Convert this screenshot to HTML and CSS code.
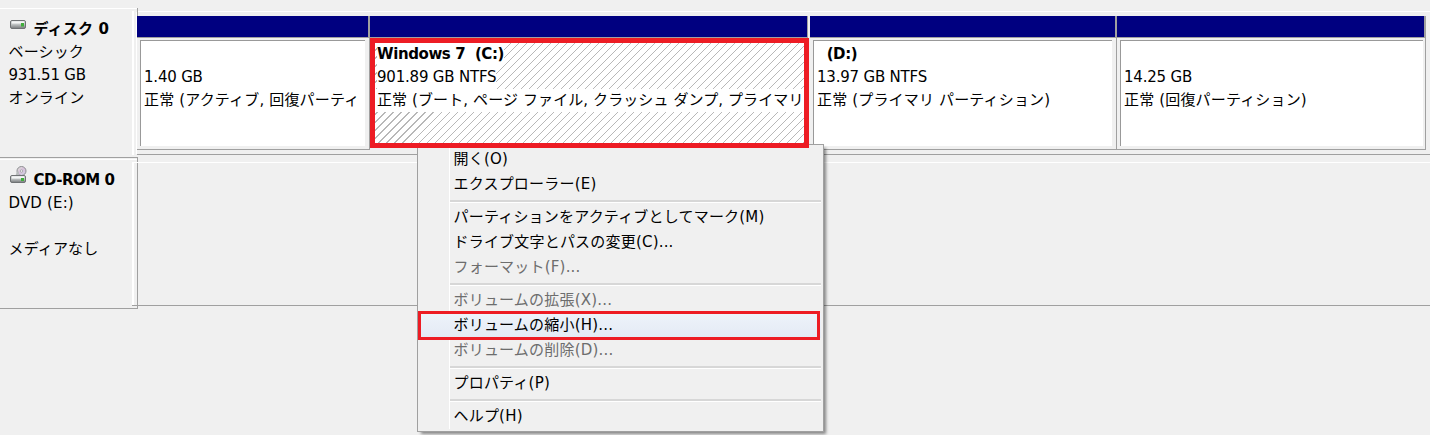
FILE: index.html
```html
<!DOCTYPE html>
<html lang="ja">
<head>
<meta charset="utf-8">
<title>ディスクの管理</title>
<link rel="stylesheet" href="styles.css">
</head>
<body>
<main class="app">
  <section class="disk disk-first">
    <div class="label">
      <div class="label-title">
        <svg class="icon" width="18" height="12" viewBox="0 0 18 12">
          <defs><linearGradient id="hd" x1="0" y1="0" x2="0" y2="1"><stop offset="0" stop-color="#e6e8e8"/><stop offset=".45" stop-color="#c4c8c8"/><stop offset="1" stop-color="#77797b"/></linearGradient></defs>
          <rect x="1.5" y="2.5" width="15" height="8" rx="1.5" fill="url(#hd)" stroke="#6f7274"/>
          <rect x="3" y="3.5" width="12" height="2" fill="#f4f5f5"/>
          <rect x="12" y="5" width="3" height="3.5" fill="#3fae3a"/>
        </svg>
        <strong class="jp">ディスク 0</strong>
      </div>
      <div class="line jp">ベーシック</div>
      <div class="line">931.51 GB</div>
      <div class="line jp">オンライン</div>
    </div>
    <div class="volumes">
      <div class="vol vol-a">
        <div class="vol-head"></div>
        <div class="vol-body"><div class="vol-box">
          <div class="line">&nbsp;</div>
          <div class="line">1.40 GB</div>
          <div class="line line-status jp">正常 (アクティブ, 回復パーティ</div>
        </div></div>
      </div>
      <div class="vol vol-b">
        <div class="vol-head"></div>
        <div class="vol-body vol-marked"><div class="vol-box vol-hatch">
          <div class="line"><strong class="on-white bold-latin">Windows 7&nbsp; (C:)</strong></div>
          <div class="line"><span class="on-white">901.89 GB NTFS</span></div>
          <div class="line line-status line-white">正常 (ブート, ページ ファイル, クラッシュ ダンプ, プライマリ</div>
        </div></div>
      </div>
      <div class="vol vol-c">
        <div class="vol-head"></div>
        <div class="vol-body"><div class="vol-box">
          <div class="line"><strong class="bold-latin">&nbsp; (D:)</strong></div>
          <div class="line">13.97 GB NTFS</div>
          <div class="line line-status jp">正常 (プライマリ パーティション)</div>
        </div></div>
      </div>
      <div class="vol vol-d">
        <div class="vol-head"></div>
        <div class="vol-body"><div class="vol-box">
          <div class="line">&nbsp;</div>
          <div class="line">14.25 GB</div>
          <div class="line line-status jp">正常 (回復パーティション)</div>
        </div></div>
      </div>
    </div>
  </section>
  <section class="disk disk-second">
    <div class="label">
      <div class="label-title">
        <svg class="icon icon-cd" width="18" height="18" viewBox="0 0 18 18">
          <defs>
            <linearGradient id="cd" x1="0" y1="0" x2="1" y2="1"><stop offset="0" stop-color="#dfe8d8"/><stop offset=".5" stop-color="#d8c0dc"/><stop offset="1" stop-color="#cfd8e2"/></linearGradient>
            <linearGradient id="hd2" x1="0" y1="0" x2="0" y2="1"><stop offset="0" stop-color="#e6e8e8"/><stop offset=".45" stop-color="#c4c8c8"/><stop offset="1" stop-color="#77797b"/></linearGradient>
          </defs>
          <circle cx="12.5" cy="5" r="4.5" fill="url(#cd)" stroke="#8c8c90"/>
          <circle cx="12.5" cy="5" r="1.2" fill="#f4f4f4" stroke="#8c8c90" stroke-width=".6"/>
          <path d="M6.5 9.5 8 5.5h2v4z" fill="#b9bcbd"/>
          <rect x="1.5" y="9.5" width="15" height="7" rx="1.5" fill="url(#hd2)" stroke="#6f7274"/>
          <rect x="3" y="10.5" width="12" height="2" fill="#f4f5f5"/>
          <rect x="12" y="12" width="3" height="3" fill="#3fae3a"/>
        </svg>
        <strong class="bold-latin bold-cd">CD-ROM 0</strong>
      </div>
      <div class="line jp">DVD (E:)</div>
      <div class="line">&nbsp;</div>
      <div class="line jp">メディアなし</div>
    </div>
    <div class="empty"></div>
  </section>

  <nav class="menu">
    <div class="item">開く(O)</div>
    <div class="item">エクスプローラー(E)</div>
    <div class="sep"></div>
    <div class="item">パーティションをアクティブとしてマーク(M)</div>
    <div class="item">ドライブ文字とパスの変更(C)...</div>
    <div class="item off">フォーマット(F)...</div>
    <div class="sep"></div>
    <div class="item off">ボリュームの拡張(X)...</div>
    <div class="item hot">ボリュームの縮小(H)...</div>
    <div class="item off">ボリュームの削除(D)...</div>
    <div class="sep"></div>
    <div class="item">プロパティ(P)</div>
    <div class="sep"></div>
    <div class="item">ヘルプ(H)</div>
  </nav>
</main>
</body>
</html>
```

FILE: styles.css
```css
* { box-sizing: border-box; }
html, body { margin: 0; height: 100%; overflow: hidden; }
body {
  background: #f0f0f0;
  color: #000;
  font: 15px/23px "DejaVu Sans", "Noto Sans CJK JP", sans-serif;
  letter-spacing: -.2px;
}
.app { position: relative; height: 435px; padding-top: 8px; }
strong { font-weight: 700; }
.jp { letter-spacing: .16px; }
.bold-latin { letter-spacing: -.4px; }
.bold-cd { letter-spacing: -.5px; }

.disk { display: flex; position: relative; }
.disk-first { height: 150px; }
.disk-second { height: 150px; margin-top: 1px; }

.label {
  position: relative;
  width: 137px;
  flex: none;
  padding: 9px 0 0 8.5px;
  border-top: 1px solid #fff;
  border-bottom: 1px solid #a0a0a0;
  white-space: nowrap;
}
.label::after {
  content: "";
  position: absolute;
  top: 2px;
  bottom: 2px;
  right: 3px;
  width: 2px;
  background: #fff;
}
.label-title { display: flex; align-items: center; gap: 7px; height: 23px; }
.icon { flex: none; align-self: flex-start; }
.icon-cd { margin-top: -3px; }
.line { height: 23px; white-space: nowrap; }
.line-status { margin-top: -.5px; }

.volumes {
  flex: 1;
  display: flex;
  margin-top: 3px;
  padding-top: 4px;
  height: 144px;
  border-top: 1px solid #fff;
  border-bottom: 1px solid #a0a0a0;
  position: relative;
  align-items: flex-start;
}
.volumes::before {
  content: "";
  position: absolute;
  left: 0;
  top: -4px;
  width: 1px;
  height: 8px;
  background: #a0a0a0;
}
.volumes::after {
  content: "";
  position: absolute;
  left: -1px;
  top: 0;
  bottom: 0;
  width: 1px;
  background: #fff;
}
.vol {
  flex: none;
  height: 134px;
  border-right: 1px solid #a0a0a0;
  border-bottom: 1px solid #a0a0a0;
}
.vol-a { width: 233px; }
.vol-b { width: 440px; border: 0; }
.vol-b .vol-head { margin-right: 2px; }
.vol-c { width: 307px; }
.vol-d { width: 309px; }
.vol-d .vol-body { padding-right: 2px; }

.vol-head { height: 22px; background: #000080; border-bottom: 1px solid #a0a0a0; border-right: 1px solid #a0a0a0; }
.vol-body { height: 111px; padding: 2px 4px 3px 3px; }
.vol-box {
  height: 106px;
  overflow: hidden;
  background: #fff;
  border-top: 1px solid #999;
  border-left: 1px solid #999;
  padding: 2px 0 0 3px;
}

.vol-marked {
  position: relative;
  z-index: 3;
  width: 439px;
  height: 110px;
  padding: 0;
  border: 5px solid #ed1c24;
}
.vol-hatch {
  height: 100px;
  border: 0;
  padding: 0 0 0 2px;
  background: repeating-linear-gradient(135deg, #fff 0, #fff 4.9px, #b8b8b8 4.9px, #b8b8b8 5.66px);
}
.on-white { background: #fff; display: inline-block; height: 23px; }
.line-white { background: #fff; margin-left: -2px; padding-left: 2px; overflow: hidden; letter-spacing: .1px; }

.empty {
  flex: 1;
  position: relative;
  height: 152px;
  margin-top: -2px;
  border-left: 1px solid #a0a0a0;
}
.empty::before {
  content: "";
  position: absolute;
  left: -6px;
  right: 0;
  top: 5px;
  height: 1px;
  background: #fff;
}
.empty::after {
  content: "";
  position: absolute;
  left: -6px;
  right: 0;
  top: 148px;
  height: 1px;
  background: #a0a0a0;
}

.menu {
  position: absolute;
  z-index: 2;
  left: 417px;
  top: 144px;
  width: 407px;
  height: 288px;
  padding: 2px;
  background: #f0f0f0;
  border: 1px solid #a0a0a0;
  box-shadow: 3px 3px 3px -1px rgba(0, 0, 0, .45);
  letter-spacing: .2px;
}
.menu::before {
  content: "";
  position: absolute;
  left: 31px;
  top: 2px;
  bottom: 2px;
  width: 1px;
  background: #fff;
}
.item {
  position: relative;
  height: 25px;
  line-height: 25px;
  padding-left: 33.5px;
  white-space: nowrap;
}
.off { color: #6d6d6d; }
.hot { background: linear-gradient(#eef3fa, #e3eaf4); }
.hot::after {
  content: "";
  position: absolute;
  left: -2px;
  right: 1px;
  top: -2px;
  bottom: -2px;
  border: 3px solid #ed1c24;
}
.sep {
  height: 8px;
  margin-left: 30px;
  padding-top: 3px;
}
.sep::before {
  content: "";
  display: block;
  height: 2px;
  background: #d7d7d7;
  border-bottom: 1px solid #fff;
}
```
